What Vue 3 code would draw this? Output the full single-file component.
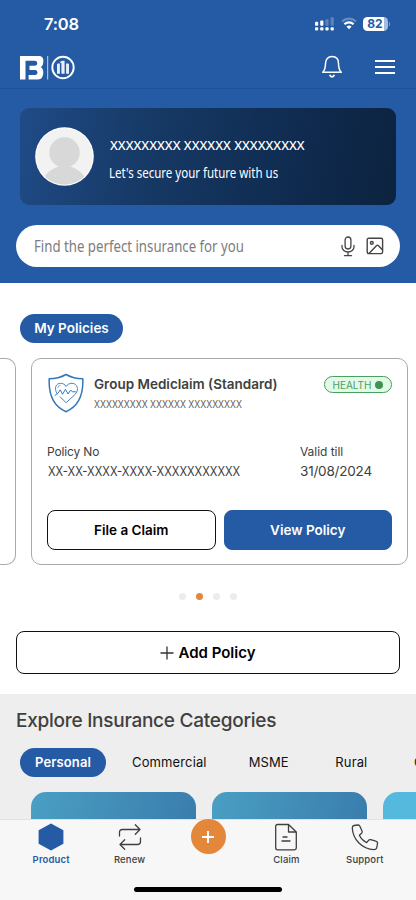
<script setup>
const tabs = ['Personal', 'Commercial', 'MSME', 'Rural', 'Others']
const dots = [0, 1, 2, 3]
</script>

<template>
  <main class="phone">
    <header class="top">
      <div class="status">
        <span class="time">7:08</span>
        <div class="indicators">
          <svg width="20" height="14" viewBox="0 0 20 14" fill="#fff">
            <rect x="0" y="4.7" width="3.2" height="4" rx="1" />
            <rect x="5.2" y="3.4" width="3.2" height="5.3" rx="1" />
            <g opacity=".25">
              <rect x="10.4" y="2.2" width="3.2" height="6.5" rx="1" />
              <rect x="15.6" y="0.2" width="3.2" height="8.5" rx="1" />
            </g>
            <rect x="0" y="10.2" width="3.2" height="3.2" rx="1" />
            <rect x="5.2" y="10.2" width="3.2" height="3.2" rx="1" />
            <rect x="10.4" y="10.2" width="3.2" height="3.2" rx="1" />
            <rect x="15.6" y="10.2" width="3.2" height="3.2" rx="1" />
          </svg>
          <svg class="wifi" width="16" height="13" viewBox="0 0 16 13" fill="none" stroke="#fff">
            <path d="M1 4.5C5 .7 11 .7 15 4.5" stroke-width="2.1" opacity=".3" />
            <path d="M3.4 7.2C6 4.7 10 4.7 12.6 7.2" stroke-width="2.2" />
            <path d="M8 12.2 5.4 9.5Q8 7.6 10.6 9.5Z" fill="#fff" stroke="none" />
          </svg>
          <div class="battery"><span>82</span></div>
          <i class="battery-tip"></i>
        </div>
      </div>
      <nav class="brandbar">
        <svg width="56" height="26" viewBox="0 0 56 26">
          <g fill="#fff">
            <path d="M0 1H20Q24 2 23.300 7Q23 11.500 20.500 12Q23.300 13 23.300 17.500Q23.300 24 18 24.500H8.600V20H15.500Q17.500 19.700 17.500 17.400Q17.500 15.200 15.500 15H9.500V10.700H15Q17.300 10.500 17.300 8.200Q17.300 5.800 15 5.700H5.500V24.500H0Z" />
            <rect x="27.200" y="1" width="1" height="23.500" opacity=".75" />
            <path d="M37 9.600Q37 8.400 38.200 8.400H39.900V18.800H37ZM41.400 8 40.300 8V6.700Q41.500 5.700 43 5.700H44.600V18.800H41.400ZM46.100 8.400H47.800Q49 8.400 49 9.600V18.800H46.100Z" opacity=".9" />
          </g>
          <circle cx="43" cy="12.500" r="10.700" stroke-width="1.900" fill="none" stroke="#fff" />
        </svg>
        <div class="actions">
          <svg width="22" height="24" viewBox="0 0 22 24" fill="none" stroke="#fff" stroke-width="1.500" stroke-linejoin="round" stroke-linecap="round">
            <path d="M1.700 17.300C4 15 4.500 12.700 4.500 8.400C4.500 4.200 7 1.600 11 1.600S17.500 4.200 17.500 8.400C17.500 12.700 18 15 20.300 17.300Z" />
            <path d="M9 20.500Q11 23.200 13 20.500" stroke-width="1.800" />
          </svg>
          <svg width="20" height="16" viewBox="0 0 20 16" stroke="#fff" stroke-width="1.900">
            <path d="M0 2H20M0 8H20M0 14H20" />
          </svg>
        </div>
      </nav>
      <section class="profile">
        <svg width="60" height="60" viewBox="0 0 60 60">
          <defs><clipPath id="avatarClip"><circle cx="29.500" cy="29.500" r="28.200" /></clipPath></defs>
          <circle cx="29.500" cy="29.500" r="29.300" fill="#fff" />
          <circle cx="29.500" cy="29.500" r="28.200" fill="#f2f2f2" />
          <g fill="#d8d8d8" clip-path="url(#avatarClip)">
            <circle cx="29.500" cy="25.500" r="15.200" />
            <path d="M25 39H34Q44 42 49 49L44 60H16L10 49Q15 42 25 39Z" />
          </g>
        </svg>
        <div class="greeting">
          <strong><span class="fit name">XXXXXXXXX XXXXXX XXXXXXXXX</span></strong>
          <p><span class="fit motto">Let's secure your future with us</span></p>
        </div>
      </section>
      <div class="search">
        <span class="fit placeholder">Find the perfect insurance for you</span>
        <svg class="mic" width="14" height="21" viewBox="0 0 14 21" fill="none" stroke="#444" stroke-width="1.300" stroke-linecap="round">
          <rect x="4.100" y="1" width="5.800" height="12" rx="2.900" />
          <path d="M1 9.500v1.200a6 5.300 0 0 0 12 0V9.500M7 16v3.500M3.500 19.700h7" />
        </svg>
        <svg class="image" width="18" height="18" viewBox="0 0 18 18" fill="none" stroke="#444" stroke-width="1.400" stroke-linejoin="round">
          <rect x="1.200" y="1.200" width="15.400" height="15.400" rx="1.500" />
          <circle cx="5.800" cy="5.900" r="1.400" />
          <path d="M3 16.500 10.400 8.700Q11.500 7.600 12.500 8.700L16.600 13" />
        </svg>
      </div>
    </header>

    <section class="policies">
      <h2 class="pill heading">My Policies</h2>
      <div class="carousel">
        <div class="peek"></div>
        <article class="policy">
          <div class="policy-head">
            <svg class="shield" width="36" height="40" viewBox="0 0 36 40" fill="none" stroke="#3478b8" stroke-linejoin="round" stroke-linecap="round">
              <path d="M18 1.500C13 4.300 7 5.800 1.200 5.800C.600 20 4.500 33 18 38.700C31.500 33 35.400 20 34.800 5.800C29 5.800 23 4.300 18 1.500Z" stroke-width="1.500" />
              <path d="M8.800 20.200C5.800 15 8.200 10.300 12.500 10.300C15 10.300 17 11.500 18 13.500C19.200 11.500 21.500 10.300 24 10.300C29.300 10.300 31.300 16.500 27.500 21L18.200 29.700L12 23.800" stroke-width=".9" />
              <path d="M7 22.300 10 20.300 12.300 16.800 14.500 21.300 17.500 16.300 20 21 22.700 17 24.300 18.800H27.500" stroke-width="1" />
              <path d="M9.800 14.500Q10.300 12.500 12.200 12.200" stroke-width=".6" />
            </svg>
            <div class="policy-title">
              <h3>Group Mediclaim (Standard)</h3>
              <p><span class="fit holder">XXXXXXXXX XXXXXX XXXXXXXXX</span></p>
            </div>
            <span class="badge">HEALTH<i></i></span>
          </div>
          <div class="facts">
            <div><label>Policy No</label><b class="number"><span class="fit code">XX-XX-XXXX-XXXX-XXXXXXXXXXX</span></b></div>
            <div class="valid"><label>Valid till</label><b>31/08/2024</b></div>
          </div>
          <div class="buttons">
            <button>File a Claim</button>
            <button class="primary">View Policy</button>
          </div>
        </article>
      </div>
      <div class="dots"><i v-for="d in dots" :key="d" :class="{ on: d === 1 }"></i></div>
      <button class="add">
        <svg width="14" height="14" viewBox="0 0 14 14" stroke="#333" stroke-width="1.300"><path d="M7 .5v13M.5 7h13" /></svg>
        <span>Add Policy</span>
      </button>
    </section>

    <section class="explore">
      <h2>Explore Insurance Categories</h2>
      <div class="tabs">
        <span v-for="(t, i) in tabs" :key="t" :class="['tab', { pill: i === 0 }]">{{ t }}</span>
      </div>
      <div class="tiles"><i></i><i></i><i class="light"></i></div>
    </section>

    <footer class="bottom">
      <div class="items">
        <div class="item active">
          <svg width="26" height="28" viewBox="0 0 26 28"><path d="M13 .4 25.400 7.300V20.700L13 27.600.600 20.700V7.300Z" fill="#255ba5" /></svg>
          <span>Product</span>
        </div>
        <div class="item">
          <svg width="26" height="28" viewBox="0 0 26 28" fill="none" stroke="#3f3f3f" stroke-width="1.300" stroke-linecap="round" stroke-linejoin="round">
            <path d="M2.500 13V9.500Q2.500 6.500 5.500 6.500H23M18.300 1.800 23 6.500 18.300 11.200M23.500 15v3.500Q23.500 21.500 20.500 21.500H3M7.700 16.800 3 21.500 7.700 26.200" />
          </svg>
          <span>Renew</span>
        </div>
        <div class="item"><div class="plus"><svg width="12" height="12" viewBox="0 0 12 12" stroke="#fff" stroke-width="1.900"><path d="M6 0v12M0 6h12" /></svg></div></div>
        <div class="item">
          <svg width="26" height="28" viewBox="0 0 26 28" fill="none" stroke="#3f3f3f" stroke-width="1.300" stroke-linecap="round" stroke-linejoin="round">
            <path d="M4.500 1.500H15.500L23.300 9V25Q23.300 26.800 21.500 26.800H4.500Q2.700 26.800 2.700 25V3.300Q2.700 1.500 4.500 1.500ZM15.500 1.500V9H23.300M10 14H14M9 18H17" />
          </svg>
          <span>Claim</span>
        </div>
        <div class="item">
          <svg width="28" height="28" viewBox="0 0 28 28" fill="none" stroke="#3f3f3f" stroke-width="1.300" stroke-linejoin="round">
            <path d="M3 2.500Q1.200 2.900 1.300 5C1.800 16.700 11.300 26.200 23 26.700Q25 26.700 25.700 25L26.500 20.500Q26.700 18.500 24.800 18.100L19.700 16.600Q18.300 16.300 17.500 17.400L15.700 19.600Q10.500 17 8.400 12.300L10.600 10.200Q11.500 9.300 11 8L8.800 3.100Q8.300 1.800 6.800 2Z" />
          </svg>
          <span>Support</span>
        </div>
      </div>
      <div class="home"></div>
    </footer>
  </main>
</template>

<style>
body { margin: 0; background: #fff; }
</style>

<style scoped>
* { box-sizing: border-box; }
h2, h3, p { margin: 0; }
svg { display: block; flex: none; }
button { font: inherit; padding: 0; }
.phone { width: 416px; height: 900px; overflow: hidden; display: flex; flex-direction: column; background: #fff; font-family: Inter, sans-serif; color: #404040; }
.fit { display: inline-block; transform-origin: left center; white-space: nowrap; }

.top { height: 283px; flex: none; background: #255ba5; color: #fff; }
.status { height: 48px; display: flex; justify-content: space-between; padding: 0 26px 0 44px; }
.time { font-size: 16.500px; font-weight: 600; line-height: 20px; padding-top: 14px; letter-spacing: -.2px; }
.indicators { display: flex; align-items: flex-start; padding-top: 17px; }
.wifi { margin-left: 6px; }
.battery { width: 25px; height: 14px; margin-left: 6px; border-radius: 4.500px; background: linear-gradient(90deg, #fff 82%, #a8bddb 82%); color: #255ba5; font-size: 12px; font-weight: 700; line-height: 14px; text-align: center; }
.battery-tip { width: 1.500px; height: 4px; margin: 5px 0 0 1px; border-radius: 0 2px 2px 0; background: #7c9dc9; }
.brandbar { height: 41px; display: flex; justify-content: space-between; padding: 7px 21px 0 20px; border-bottom: 1px solid #1e5197; }
.actions { display: flex; gap: 32px; align-items: flex-start; }
.actions svg:last-child { margin-top: 4px; }
.profile { height: 97px; margin: 19px 20px 0; padding-left: 15px; border-radius: 9px; display: flex; align-items: center; background: linear-gradient(100deg, #204b87, #163965 35%, #0f2a4e 75%, #0c233f); }
.greeting { margin-left: 14px; font-family: "Noto Sans", sans-serif; height: 97px; padding-top: 27px; }
.greeting strong { display: block; padding-left: 1px; font-size: 13px; font-weight: 500; line-height: 20px; }
.greeting p { font-size: 14px; line-height: 20px; margin-top: 8px; }
.name { transform: scaleX(.986); }
.motto { transform: scaleX(.822); }
.search { height: 42px; margin: 20px 16px 0; padding: 0 16px 0 18px; border-radius: 21px; background: #fff; display: flex; align-items: center; }
.placeholder { width: 306px; color: #7d7d7d; font: 15.500px/22px "Noto Sans", sans-serif; transform: scaleX(.853); }
.mic { margin-left: 1px; }
.image { margin-left: 11px; }

.policies { height: 411px; flex: none; padding-top: 31px; }
.pill { border-radius: 15px; background: #255ba5; color: #fff; }
.heading { width: 103px; height: 29px; margin-left: 20px; font-size: 13.500px; font-weight: 600; line-height: 29px; text-align: center; }
.carousel { display: flex; gap: 15px; margin-top: 15px; height: 207px; }
.peek { width: 16px; border: 1px solid #aaa; border-left: 0; border-radius: 0 10px 10px 0; }
.policy { width: 377px; flex: none; padding: 14px 15px 0; border: 1px solid #aaa; border-radius: 10px; }
.policy-head { display: flex; height: 71px; }
.shield { margin-left: 1px; }
.policy-title { margin-left: 10px; flex: 1; white-space: nowrap; }
h3 { font-size: 13.500px; line-height: 20px; font-weight: 600; padding-top: 1px; }
.policy-title p { font-size: 10.500px; line-height: 16px; margin-top: 3px; color: #5c5c5c; }
.holder { transform: scaleX(.832); }
.code { transform: scaleX(.825); }
.badge { width: 68px; height: 17px; margin-top: 3px; border: 1px solid #4b9f5f; border-radius: 9px; background: #e2f9e8; color: #4b9f5f; font-size: 10px; display: flex; align-items: center; justify-content: center; gap: 4px; }
.badge i { width: 8px; height: 8px; border-radius: 50%; background: #3f9352; }
.facts { display: flex; height: 66px; }
.facts > div { width: 253px; }
.facts label { display: block; font-size: 12px; line-height: 16px; letter-spacing: -.15px; }
.facts .valid label { letter-spacing: -.05px; }
.facts b { display: block; font-size: 13.500px; font-weight: 400; line-height: 20px; margin-top: 1px; }
.facts .valid { width: auto; }
.facts .valid b { letter-spacing: -.2px; }
.number { padding-left: 1px; }
.buttons { display: flex; gap: 8px; }
.buttons button { height: 40px; flex: 1; border: 1px solid #111; border-radius: 8px; background: #fff; color: #000; font-size: 13.500px; font-weight: 600; }
.buttons .primary { border-color: #255ba5; background: #255ba5; color: #fff; }
.dots { height: 8px; margin-top: 27.500px; display: flex; gap: 9.500px; justify-content: center; }
.dots i { width: 7.600px; height: 7.600px; border-radius: 50%; background: #ececec; }
.dots .on { background: #e3873a; }
.add { width: 384px; height: 43px; margin: 30.500px 16px 0; border: 1px solid #111; border-radius: 8px; background: #fff; color: #000; display: flex; align-items: center; justify-content: center; gap: 4px; font-size: 15px; font-weight: 600; }

.explore { height: 125px; flex: none; background: #eee; overflow: hidden; padding-top: 14px; }
.explore h2 { padding-left: 16px; font-size: 19px; line-height: 26px; font-weight: 500; letter-spacing: -.26px; }
.tabs { display: flex; align-items: center; height: 29px; margin: 14px 0 0 20px; font-size: 13px; line-height: 29px; letter-spacing: .13px; color: #111; white-space: nowrap; }
.tab { margin-right: 42px; }
.tab:nth-child(n+3) { margin-right: 46.500px; }
.tab.pill { width: 86px; margin-right: 26px; flex: none; text-align: center; font-weight: 600; color: #fff; }
.tiles { display: flex; gap: 16px; margin: 15px 0 0 31px; }
.tiles i { flex: none; width: 165px; height: 60px; border-radius: 15px; background: linear-gradient(105deg, #4a9fc3, #397bac); }
.tiles i:nth-child(2) { width: 155px; }
.tiles .light { background: #55b8dd; }

.bottom { flex: none; height: 81px; background: #f7f7f7; border-top: 1px solid #e2e2e2; }
.items { display: flex; padding: 3px 12px 0; height: 67px; }
.item { flex: 1; display: flex; flex-direction: column; align-items: center; font-size: 9.500px; line-height: 14px; font-weight: 500; letter-spacing: .15px; }
.item span { margin-top: 2px; }
.active { color: #255ba5; font-weight: 600; }
.plus { width: 35px; height: 35px; margin-top: -4px; border-radius: 50%; background: #e3873a; display: flex; align-items: center; justify-content: center; }
.home { width: 148px; height: 5px; margin: 0 auto; border-radius: 3px; background: #000; }
</style>
